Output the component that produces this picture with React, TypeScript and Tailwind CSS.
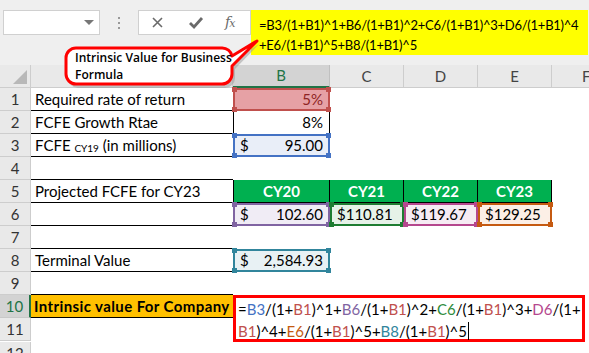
import React from "react";

type HlProps = {
  box: string;
  sq: string;
  w: string;
  children?: React.ReactNode;
};

// formula reference highlight (colored frame with corner handles)
const Hl = ({ box, sq, w, children }: HlProps) => (
  <div className={`relative shrink-0 h-full border-2 ${box} ${w} flex items-center justify-between px-[5px]`}>
    {children}
    <span className={`absolute -left-[3px] -top-[3px] w-[5px] h-[5px] ${sq}`} />
    <span className={`absolute -right-[3px] -top-[3px] w-[5px] h-[5px] ${sq}`} />
    <span className={`absolute -left-[3px] -bottom-[3px] w-[5px] h-[5px] ${sq}`} />
    <span className={`absolute -right-[3px] -bottom-[3px] w-[5px] h-[5px] ${sq}`} />
  </div>
);

const RowHead = ({ n, sel }: { n: number; sel?: boolean }) => (
  <div
    className={
      sel
        ? "w-[31px] shrink-0 h-full flex items-center justify-center bg-[#d3d3d3] text-[#217346] border-r-2 border-r-[#217346] border-b border-b-[#c8c8c8]"
        : "w-[31px] shrink-0 h-full flex items-center justify-center bg-[#e9e9e9] text-[#333] border-r border-b border-[#cdcdcd]"
    }
  >
    {n}
  </div>
);

const Row = ({ n, children }: { n: number; children?: React.ReactNode }) => (
  <div className="flex h-[23px]">
    <RowHead n={n} />
    {children}
  </div>
);

const ref: Record<string, string> = {
  B3: "text-[#4472c4]",
  B1: "text-[#c0504d]",
  B6: "text-[#8064a2]",
  C6: "text-[#2e8b3c]",
  D6: "text-[#b5478e]",
  E6: "text-[#c55a11]",
  B8: "text-[#31859c]",
};

const Formula = ({ text }: { text: string }) => (
  <>
    {text.split(/(B3|B1|B6|C6|D6|E6|B8)/).map((t, i) =>
      ref[t] ? (
        <span key={i} className={ref[t]}>
          {t}
        </span>
      ) : (
        <span key={i}>{t}</span>
      )
    )}
  </>
);

export default function App() {
  return (
    <div className="relative w-[589px] h-[353px] overflow-hidden bg-white font-['Lato',sans-serif] text-[15px] text-black">
      {/* toolbar + formula bar */}
      <div className="h-[65px] bg-[#efefef] flex items-start pt-[10px] pl-[3px]">
        <div className="w-[97px] h-[25px] bg-white border border-[#d0d0d0] relative">
          <span className="absolute right-[5px] top-[9px] w-0 h-0 border-l-[5px] border-r-[5px] border-t-[5px] border-l-transparent border-r-transparent border-t-[#777]" />
        </div>
        <div className="w-[38px] h-[25px] flex flex-col items-center justify-center gap-[3px]">
          <span className="w-[2px] h-[2px] bg-[#999]" />
          <span className="w-[2px] h-[2px] bg-[#999]" />
          <span className="w-[2px] h-[2px] bg-[#999]" />
        </div>
        <div className="w-[113px] h-[25px] bg-white border border-[#d0d0d0] flex items-center">
          <svg width="38" height="23" viewBox="0 0 38 23">
            <path d="M14 7 L23 16 M23 7 L14 16" stroke="#6a6a6a" strokeWidth="1.6" />
          </svg>
          <svg width="38" height="23" viewBox="0 0 38 23">
            <path d="M13 12 L17 16 L25 7" stroke="#6a6a6a" strokeWidth="2.8" fill="none" />
          </svg>
          <span className="ml-[10px] font-['DejaVu_Serif',serif] italic text-[14px] text-[#6a6a6a] tracking-[-1px]">
            f<span className="text-[11px]">x</span>
          </span>
        </div>
        <div className="w-[337px] h-[45px] bg-[#ffff00] pl-[8px] pt-[5px] leading-[20px] text-[13px] tracking-[-0.25px] whitespace-nowrap overflow-hidden">
          <div>=B3/(1+B1)^1+B6/(1+B1)^2+C6/(1+B1)^3+D6/(1+B1)^4</div>
          <div>+E6/(1+B1)^5+B8/(1+B1)^5</div>
        </div>
      </div>

      {/* column headers */}
      <div className="flex h-[23px] bg-[#e9e9e9] text-[#444]">
        <div className="w-[31px] shrink-0 h-full border-r border-b border-[#cdcdcd] flex items-end justify-end pr-[3px] pb-[3px]">
          <svg width="14" height="14" viewBox="0 0 14 14">
            <path d="M14 0 V14 H0 Z" fill="#b8b8b8" />
          </svg>
        </div>
        <div className="w-[202px] shrink-0 h-full border-r border-b border-[#cdcdcd] flex items-center justify-center">A</div>
        <div className="w-[97px] shrink-0 h-full bg-[#d3d3d3] text-[#217346] border-r border-[#c0c0c0] border-b-2 border-b-[#217346] flex items-center justify-center">B</div>
        <div className="w-[74px] shrink-0 h-full border-r border-b border-[#cdcdcd] flex items-center justify-center">C</div>
        <div className="w-[74px] shrink-0 h-full border-r border-b border-[#cdcdcd] flex items-center justify-center">D</div>
        <div className="w-[74px] shrink-0 h-full border-r border-b border-[#cdcdcd] flex items-center justify-center">E</div>
        <div className="flex-1 h-full border-b border-[#cdcdcd] flex items-center justify-start pl-[30px]">F</div>
      </div>

      {/* rows */}
      <Row n={1}>
        <div className="w-[202px] shrink-0 h-full border-b border-black flex items-center pl-[4px]">Required rate of return</div>
        <Hl box="border-[#c0504d] bg-[#e6a1a5]" sq="bg-[#c0504d]" w="w-[97px]">
          <span />
          <span className="text-[#8e2424]">5%</span>
        </Hl>
      </Row>
      <Row n={2}>
        <div className="w-[202px] shrink-0 h-full border-b border-black flex items-center pl-[4px]">FCFE Growth Rtae</div>
        <div className="w-[97px] shrink-0 h-full border-x border-black flex items-center justify-end pr-[6px]">8%</div>
      </Row>
      <Row n={3}>
        <div className="w-[202px] shrink-0 h-full border-b border-black flex items-center pl-[4px] whitespace-pre">
          FCFE <span className="text-[10px] relative top-[3px]">CY19</span> (in millions)
        </div>
        <Hl box="border-[#4472c4] bg-[#e9eef8]" sq="bg-[#4472c4]" w="w-[97px]">
          <span>$</span>
          <span>95.00</span>
        </Hl>
      </Row>
      <Row n={4}>
        <div className="w-[202px] shrink-0 h-full border-b border-black" />
      </Row>
      <Row n={5}>
        <div className="w-[202px] shrink-0 h-full border-b border-black flex items-center pl-[4px]">Projected FCFE for CY23</div>
        <div className="w-[97px] shrink-0 h-full bg-[#00b050] border-x border-b border-black text-white font-bold flex items-center justify-center">CY20</div>
        <div className="w-[74px] shrink-0 h-full bg-[#00b050] border-r border-b border-black text-white font-bold flex items-center justify-center">CY21</div>
        <div className="w-[74px] shrink-0 h-full bg-[#00b050] border-r border-b border-black text-white font-bold flex items-center justify-center">CY22</div>
        <div className="w-[74px] shrink-0 h-full bg-[#00b050] border-r border-b border-black text-white font-bold flex items-center justify-center">CY23</div>
      </Row>
      <Row n={6}>
        <div className="w-[202px] shrink-0 h-full border-b border-black" />
        <Hl box="border-[#8064a2] bg-[#f0ecf5]" sq="bg-[#8064a2]" w="w-[97px]">
          <span>$</span>
          <span>102.60</span>
        </Hl>
        <Hl box="border-[#1e7d32] bg-[#e6f2e8]" sq="bg-[#1e7d32]" w="w-[74px]">
          <span>$110.81</span>
        </Hl>
        <Hl box="border-[#b5478e] bg-[#f6ebf3]" sq="bg-[#b5478e]" w="w-[74px]">
          <span>$119.67</span>
        </Hl>
        <Hl box="border-[#c55a11] bg-[#fcefe6]" sq="bg-[#c55a11]" w="w-[74px]">
          <span>$129.25</span>
        </Hl>
      </Row>
      <Row n={7}>
        <div className="w-[202px] shrink-0 h-full border-b border-black" />
      </Row>
      <Row n={8}>
        <div className="w-[202px] shrink-0 h-full border-b border-black flex items-center pl-[4px]">Terminal Value</div>
        <Hl box="border-[#31859c] bg-[#e8f1f4]" sq="bg-[#31859c]" w="w-[97px]">
          <span>$</span>
          <span>2,584.93</span>
        </Hl>
      </Row>
      <Row n={9}>
        <div className="w-[202px] shrink-0 h-full border-b border-black" />
      </Row>

      {/* rows 10-11 with formula being edited */}
      <div className="flex">
        <div>
          <div className="flex h-[23px]">
            <RowHead n={10} sel />
            <div className="w-[202px] shrink-0 h-full bg-[#ffc000] border-b border-black font-bold flex items-center pl-[3px] whitespace-nowrap tracking-[0.4px]">
              Intrinsic value For Company
            </div>
          </div>
          <div className="flex h-[23px]">
            <RowHead n={11} />
            <div className="w-[202px] shrink-0 h-full" />
          </div>
        </div>
        <div className="w-[352px] h-[47px] border-[3px] border-[#ff0000] pl-[2px] leading-[22px] whitespace-nowrap">
          <div>
            <Formula text="=B3/(1+B1)^1+B6/(1+B1)^2+C6/(1+B1)^3+D6/(1+" />
          </div>
          <div className="flex items-center">
            <Formula text="B1)^4+E6/(1+B1)^5+B8/(1+B1)^5" />
            <span className="w-px h-[18px] bg-black ml-[1px]" />
          </div>
        </div>
      </div>
      <Row n={12} />

      {/* callout */}
      <div className="absolute left-[60px] top-[36px] w-[205px] h-[56px]">
        <svg width="205" height="56" viewBox="0 0 205 56" className="absolute inset-0">
          <path
            d="M18 14 H164 A10 10 0 0 1 173 20 L197 5 L173 30 V39 A10 10 0 0 1 163 49 H16 A10 10 0 0 1 6 39 V24 A10 10 0 0 1 16 14 Z"
            fill="#9a9a9a"
            opacity="0.5"
            transform="translate(2 3)"
          />
          <path
            d="M16 12 H162 A10 10 0 0 1 172 20 L197 5 L172 30 V38 A10 10 0 0 1 162 48 H16 A10 10 0 0 1 6 38 V22 A10 10 0 0 1 16 12 Z"
            fill="white"
            stroke="#ff0000"
            strokeWidth="3"
            strokeLinejoin="round"
          />
        </svg>
        <div className="absolute left-[15px] top-[13px] text-[12px] leading-[17px] font-semibold text-black font-['Open_Sans',sans-serif]">
          <div>Intrinsic Value for Business</div>
          <div>Formula</div>
        </div>
      </div>
    </div>
  );
}
